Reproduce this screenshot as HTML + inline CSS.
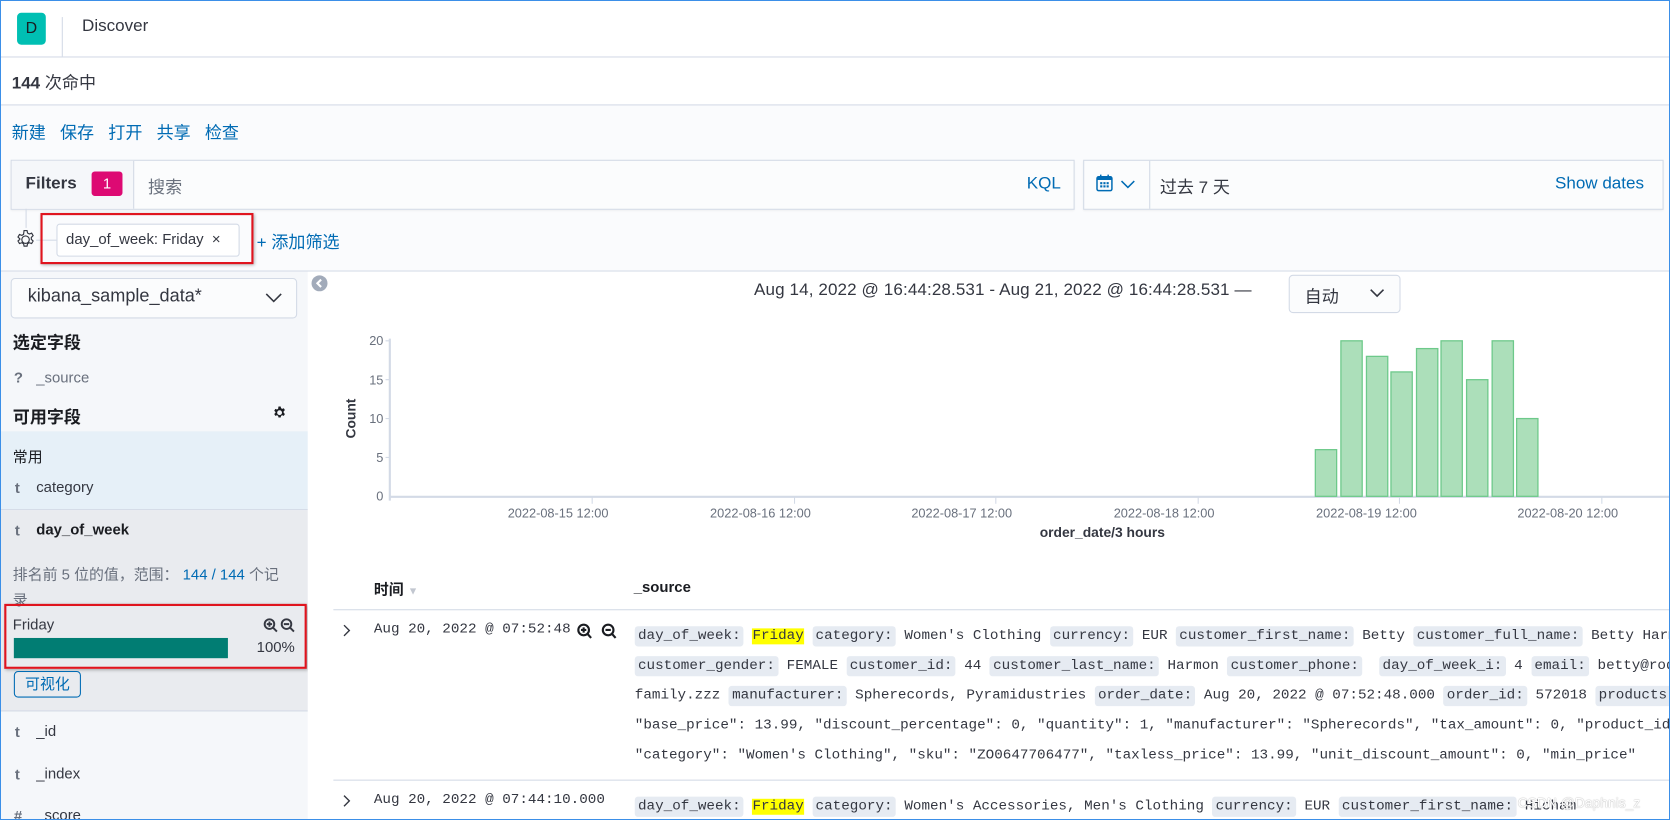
<!DOCTYPE html>
<html><head><meta charset="utf-8"><style>
html,body{margin:0;padding:0;width:1670px;height:820px;overflow:hidden;background:#fff}
#w{position:absolute;left:0;top:0;width:1568px;height:770px;transform:scale(1.06505);transform-origin:0 0;font-family:"Liberation Sans","Noto Sans CJK SC",sans-serif;color:#343741;overflow:hidden;background:#fafbfd}
.a{position:absolute;white-space:nowrap}
.mono{font-family:"Liberation Mono","Noto Sans CJK SC",monospace;font-size:13.4px;color:#343741}
.pl{background:#e6ebf2;border-radius:3px;padding:2px 3px}
.hl{background:#ffff00}
.ln{position:absolute;left:596px;white-space:nowrap;height:24px;line-height:24px}
.blue{color:#006bb4}
.fld{font-size:14px;color:#343741}
.t{color:#69707d;font-weight:bold;font-size:14px}
</style></head><body><div id="w">
<div class="a" style="left:0;top:0;width:1568px;height:53px;background:#fff;border-bottom:1px solid #d3dae6;box-shadow:0 1px 3px rgba(0,0,0,.08)"></div>
<div class="a" style="left:16px;top:12px;width:27px;height:30px;background:#00bfb3;border-radius:4px;text-align:center;line-height:30px;font-size:15px;color:#1a1c21">D</div>
<div class="a" style="left:58px;top:16px;width:1px;height:37px;background:#d3dae6"></div>
<div class="a" style="left:77px;top:16px;font-size:16px;color:#343741">Discover</div>
<div class="a" style="left:0;top:54px;width:1568px;height:44px;background:#fff;border-bottom:1px solid #d3dae6"></div>
<div class="a" style="left:11px;top:64px;font-size:16px"><b>144</b> 次命中</div>
<div class="a blue" style="left:11px;top:111px;font-size:16px;word-spacing:0">新建&nbsp;&nbsp;&nbsp;保存&nbsp;&nbsp;&nbsp;打开&nbsp;&nbsp;&nbsp;共享&nbsp;&nbsp;&nbsp;检查</div>
<div class="a" style="left:10px;top:150px;width:997px;height:45px;background:#fbfcfd;border:1px solid #d3dae6;box-shadow:0 1px 2px rgba(0,0,0,.06)"></div>
<div class="a" style="left:11px;top:151px;width:114px;height:45px;background:#f5f7fa;border-right:1px solid #d3dae6"></div>
<div class="a" style="left:24px;top:164px;font-size:16px;font-weight:bold;color:#343741">Filters</div>
<div class="a" style="left:86px;top:161px;width:29px;height:23px;background:#dd0a73;border-radius:3px;color:#fff;text-align:center;line-height:23px;font-size:14px">1</div>
<div class="a" style="left:139px;top:162px;font-size:16px;color:#69707d">搜索</div>
<div class="a blue" style="left:964px;top:164px;font-size:16px">KQL</div>
<div class="a" style="left:1017px;top:150px;width:543px;height:45px;background:#fbfcfd;border:1px solid #d3dae6;box-shadow:0 1px 2px rgba(0,0,0,.06)"></div>
<div class="a" style="left:1079px;top:151px;width:1px;height:45px;background:#d3dae6"></div>
<svg class="a" style="left:1028px;top:163px" width="18" height="18" viewBox="0 0 18 18"><rect x="2" y="3" width="14" height="13" rx="1.5" fill="none" stroke="#006bb4" stroke-width="1.4"/><rect x="2" y="3" width="14" height="3" fill="#006bb4"/><line x1="5.5" y1="1" x2="5.5" y2="4" stroke="#006bb4" stroke-width="1.4"/><line x1="12.5" y1="1" x2="12.5" y2="4" stroke="#006bb4" stroke-width="1.4"/><g fill="#006bb4"><rect x="5" y="8" width="2" height="2"/><rect x="8" y="8" width="2" height="2"/><rect x="11" y="8" width="2" height="2"/><rect x="5" y="11" width="2" height="2"/><rect x="8" y="11" width="2" height="2"/><rect x="11" y="11" width="2" height="2"/></g></svg>
<svg class="a" style="left:1052px;top:168px" width="14" height="10" viewBox="0 0 14 10"><path d="M1 2l6 6 6-6" fill="none" stroke="#006bb4" stroke-width="1.4"/></svg>
<div class="a" style="left:1089px;top:162px;font-size:16px;color:#343741">过去 7 天</div>
<div class="a blue" style="left:1460px;top:164px;font-size:16px">Show dates</div>
<div class="a" style="left:24px;top:196px;width:1px;height:18px;background:#d3dae6"></div>
<div class="a" style="left:34px;top:225px;width:19px;height:1px;background:#d3dae6"></div>
<svg class="a" style="left:14px;top:215px" width="20" height="20" viewBox="0 0 20 20"><path d="M10 6.5a3.5 3.5 0 1 0 0 7 3.5 3.5 0 1 0 0-7z M8.6 1.5h2.8l.5 2.3 1.6.9 2.2-.8 1.4 2.4-1.7 1.6v1.8l1.7 1.6-1.4 2.4-2.2-.8-1.6.9-.5 2.3H8.6l-.5-2.3-1.6-.9-2.2.8-1.4-2.4 1.7-1.6V9.2L2.9 7.6l1.4-2.4 2.2.8 1.6-.9z" fill="none" stroke="#343741" stroke-width="1.1"/></svg>
<div class="a" style="left:53px;top:210px;width:170px;height:29px;background:#fff;border:1px solid #d3dae6;border-radius:3px"></div>
<div class="a" style="left:62px;top:216px;font-size:14px;color:#343741">day_of_week: Friday&nbsp;&nbsp;×</div>
<div class="a" style="left:38px;top:200px;width:196px;height:44px;border:2px solid #e0141e;box-shadow:1px 1px 3px rgba(0,0,0,.3)"></div>
<div class="a blue" style="left:241px;top:214px;font-size:16px">+ 添加筛选</div>
<div class="a" style="left:0;top:254px;width:1568px;height:1px;background:#d3dae6"></div>
<div class="a" style="left:0;top:255px;width:289px;height:515px;background:#f5f7fa"></div>
<div class="a" style="left:10px;top:261px;width:267px;height:36px;background:#fbfcfd;border:1px solid #d3dae6;border-radius:4px"></div>
<div class="a" style="left:26px;top:268px;font-size:17px;color:#343741">kibana_sample_data*</div>
<svg class="a" style="left:248px;top:273px" width="18" height="12" viewBox="0 0 18 12"><path d="M2 3l7 7 7-7" fill="none" stroke="#343741" stroke-width="1.5"/></svg>
<div class="a" style="left:12px;top:308px;font-size:16px;font-weight:bold;color:#1a1c21">选定字段</div>
<div class="a t" style="left:13px;top:346px">?</div>
<div class="a" style="left:34px;top:346px;font-size:14px;color:#69707d">_source</div>
<div class="a" style="left:12px;top:378px;font-size:16px;font-weight:bold;color:#1a1c21">可用字段</div>
<svg class="a" style="left:256px;top:381px" width="13" height="13" viewBox="0 0 20 20"><path d="M10 6.5a3.5 3.5 0 1 0 0 7 3.5 3.5 0 1 0 0-7z M8.4 1h3.2l.5 2.4 1.7 1 2.3-.9 1.6 2.7-1.8 1.7v2.2l1.8 1.7-1.6 2.7-2.3-.9-1.7 1-.5 2.4H8.4l-.5-2.4-1.7-1-2.3.9-1.6-2.7 1.8-1.7V8.9L2.3 7.2l1.6-2.7 2.3.9 1.7-1z" fill="#1a1c21" fill-rule="evenodd"/></svg>
<div class="a" style="left:0;top:405px;width:289px;height:73px;background:#e6f0f8;border-bottom:1px solid #d3dae6"></div>
<div class="a" style="left:12px;top:419px;font-size:14px;color:#1a1c21">常用</div>
<div class="a t" style="left:14px;top:450px">t</div>
<div class="a fld" style="left:34px;top:449px">category</div>
<div class="a" style="left:0;top:479px;width:289px;height:188px;background:#e9ebef;border-bottom:1px solid #d3dae6"></div>
<div class="a t" style="left:14px;top:490px">t</div>
<div class="a" style="left:34px;top:489px;font-size:14px;font-weight:bold;color:#1a1c21">day_of_week</div>
<div class="a" style="left:12px;top:529px;font-size:14px;color:#69707d">排名前 5 位的值，范围：&nbsp;<span class="blue">144 / 144</span> 个记</div>
<div class="a" style="left:12px;top:553px;font-size:14px;color:#69707d">录</div>
<div class="a" style="left:12px;top:578px;font-size:14px;color:#343741">Friday</div>
<svg class="a" style="left:247px;top:580px" width="32" height="15" viewBox="0 0 32 15"><g fill="none" stroke="#343741" stroke-width="1.8"><circle cx="6" cy="6" r="4.5"/><line x1="9.5" y1="9.5" x2="13" y2="13"/><line x1="3.5" y1="6" x2="8.5" y2="6"/><line x1="6" y1="3.5" x2="6" y2="8.5"/><circle cx="22" cy="6" r="4.5"/><line x1="25.5" y1="9.5" x2="29" y2="13"/><line x1="19.5" y1="6" x2="24.5" y2="6"/></g></svg>
<div class="a" style="left:13px;top:599px;width:201px;height:19px;background:#017d73"></div>
<div class="a" style="left:241px;top:599px;font-size:14px;color:#343741">100%</div>
<div class="a" style="left:4px;top:567px;width:280px;height:57px;border:2px solid #e0141e;box-shadow:1px 1px 3px rgba(0,0,0,.3)"></div>
<div class="a" style="left:13px;top:630px;width:61px;height:23px;border:1px solid #006bb4;border-radius:4px;text-align:center;line-height:23px;font-size:14px;color:#006bb4">可视化</div>
<div class="a t" style="left:14px;top:679px">t</div>
<div class="a fld" style="left:34px;top:678px">_id</div>
<div class="a t" style="left:14px;top:719px">t</div>
<div class="a fld" style="left:34px;top:718px">_index</div>
<div class="a t" style="left:13px;top:758px">#</div>
<div class="a fld" style="left:34px;top:757px">_score</div>
<div class="a" style="left:289px;top:255px;width:1279px;height:515px;background:#fff"></div>
<svg class="a" style="left:292px;top:258px" width="16" height="16" viewBox="0 0 16 16"><circle cx="8" cy="8" r="7.5" fill="#a2abba"/><path d="M9.5 4.5L6 8l3.5 3.5" fill="none" stroke="#fff" stroke-width="2"/></svg>
<div class="a" style="left:708px;top:264px;font-size:16px;color:#343741;letter-spacing:.1px">Aug 14, 2022 @ 16:44:28.531 - Aug 21, 2022 @ 16:44:28.531 —</div>
<div class="a" style="left:1210px;top:258px;width:103px;height:34px;background:#fbfcfd;border:1px solid #d3dae6;border-radius:4px"></div>
<div class="a" style="left:1225px;top:265px;font-size:16px">自动</div>
<svg class="a" style="left:1285px;top:270px" width="16" height="11" viewBox="0 0 16 11"><path d="M2 2l6 6 6-6" fill="none" stroke="#343741" stroke-width="1.5"/></svg>
<svg class="a" style="left:310px;top:300px" width="1258" height="215" viewBox="310 300 1258 215" font-family="Liberation Sans, sans-serif">
<g font-size="12" fill="#69707d" text-anchor="end"><text x="360" y="324">20</text><text x="360" y="361">15</text><text x="360" y="397">10</text><text x="360" y="434">5</text><text x="360" y="470">0</text></g>
<g stroke="#d3dae6"><line x1="362" y1="320" x2="366" y2="320"/><line x1="362" y1="356.5" x2="366" y2="356.5"/><line x1="362" y1="393" x2="366" y2="393"/><line x1="362" y1="429.5" x2="366" y2="429.5"/></g>
<line x1="366" y1="318" x2="366" y2="470" stroke="#d3dae6" stroke-width="2"/>
<line x1="366" y1="466.5" x2="1568" y2="466.5" stroke="#d3dae6" stroke-width="2"/>
<g stroke="#d3dae6"><line x1="556" y1="467" x2="556" y2="473"/><line x1="746" y1="467" x2="746" y2="473"/><line x1="935" y1="467" x2="935" y2="473"/><line x1="1125" y1="467" x2="1125" y2="473"/><line x1="1314" y1="467" x2="1314" y2="473"/><line x1="1504" y1="467" x2="1504" y2="473"/></g>
<text x="334" y="393" font-size="13" font-weight="bold" fill="#343741" transform="rotate(-90 334 393)" text-anchor="middle">Count</text>
<g font-size="12" fill="#69707d" text-anchor="middle"><text x="524" y="486">2022-08-15 12:00</text><text x="714" y="486">2022-08-16 12:00</text><text x="903" y="486">2022-08-17 12:00</text><text x="1093" y="486">2022-08-18 12:00</text><text x="1283" y="486">2022-08-19 12:00</text><text x="1472" y="486">2022-08-20 12:00</text></g>
<text x="1035" y="504" font-size="13" font-weight="bold" fill="#343741" text-anchor="middle">order_date/3 hours</text>
<g fill="#acdfba" stroke="#6dc98a" stroke-width="1.2">
<rect x="1235" y="422.2" width="20" height="43.8"/>
<rect x="1259" y="320" width="20" height="146"/>
<rect x="1283" y="334.6" width="20" height="131.4"/>
<rect x="1306" y="349.2" width="20" height="116.8"/>
<rect x="1330" y="327.3" width="20" height="138.7"/>
<rect x="1353" y="320" width="20" height="146"/>
<rect x="1377" y="356.5" width="20" height="109.5"/>
<rect x="1401" y="320" width="20" height="146"/>
<rect x="1424" y="393" width="20" height="73"/>
</g>
</svg>
<div class="a" style="left:351px;top:543px;font-size:14px;font-weight:bold;color:#1a1c21">时间 <span style="color:#c2c7d0;font-size:10px">▼</span></div>
<div class="a" style="left:595px;top:543px;font-size:14px;font-weight:bold;color:#1a1c21">_source</div>
<div class="a" style="left:313px;top:572px;width:1255px;height:1px;background:#d3dae6"></div>
<svg class="a" style="left:321px;top:585px" width="10" height="14" viewBox="0 0 10 14"><path d="M2 2l5 5-5 5" fill="none" stroke="#343741" stroke-width="1.3"/></svg>
<div class="a mono" style="left:351px;top:584px;width:186px;overflow:hidden">Aug 20, 2022 @ 07:52:48.000</div>
<svg class="a" style="left:541px;top:585px" width="42" height="16" viewBox="0 0 42 16"><g fill="none" stroke="#1a1c21" stroke-width="2"><circle cx="7" cy="6.5" r="5"/><line x1="10.5" y1="10" x2="14" y2="14"/><line x1="4.5" y1="6.5" x2="9.5" y2="6.5"/><line x1="7" y1="4" x2="7" y2="9"/><circle cx="30" cy="6.5" r="5"/><line x1="33.5" y1="10" x2="37" y2="14"/><line x1="27.5" y1="6.5" x2="32.5" y2="6.5"/></g></svg>
<div class="ln mono" style="top:586px"><span class="pl">day_of_week:</span> <span class="hl">Friday</span> <span class="pl">category:</span> Women's Clothing <span class="pl">currency:</span> EUR <span class="pl">customer_first_name:</span> Betty <span class="pl">customer_full_name:</span> Betty Harmon</div>
<div class="ln mono" style="top:614px"><span class="pl">customer_gender:</span> FEMALE <span class="pl">customer_id:</span> 44 <span class="pl">customer_last_name:</span> Harmon <span class="pl">customer_phone:</span>&nbsp; <span class="pl">day_of_week_i:</span> 4 <span class="pl">email:</span> betty@rodriguez-</div>
<div class="ln mono" style="top:642px">family.zzz <span class="pl">manufacturer:</span> Spherecords, Pyramidustries <span class="pl">order_date:</span> Aug 20, 2022 @ 07:52:48.000 <span class="pl">order_id:</span> 572018 <span class="pl">products:</span></div>
<div class="ln mono" style="top:670px">"base_price": 13.99, "discount_percentage": 0, "quantity": 1, "manufacturer": "Spherecords", "tax_amount": 0, "product_id"</div>
<div class="ln mono" style="top:698px">"category": "Women's Clothing", "sku": "ZO0647706477", "taxless_price": 13.99, "unit_discount_amount": 0, "min_price"</div>
<div class="a" style="left:313px;top:732px;width:1255px;height:1px;background:#d3dae6"></div>
<svg class="a" style="left:321px;top:745px" width="10" height="14" viewBox="0 0 10 14"><path d="M2 2l5 5-5 5" fill="none" stroke="#343741" stroke-width="1.3"/></svg>
<div class="a mono" style="left:351px;top:744px">Aug 20, 2022 @ 07:44:10.000</div>
<div class="ln mono" style="top:746px"><span class="pl">day_of_week:</span> <span class="hl">Friday</span> <span class="pl">category:</span> Women's Accessories, Men's Clothing <span class="pl">currency:</span> EUR <span class="pl">customer_first_name:</span> Hicham</div>
<div class="a" style="left:1425px;top:746px;font-size:13px;color:#fff;text-shadow:0 0 1px #888">CSDN @Daphnis_z</div>
</div>
<div style="position:absolute;left:0;top:0;width:1668px;height:818px;border:1px solid #3b8fe8;pointer-events:none"></div>
</body></html>
